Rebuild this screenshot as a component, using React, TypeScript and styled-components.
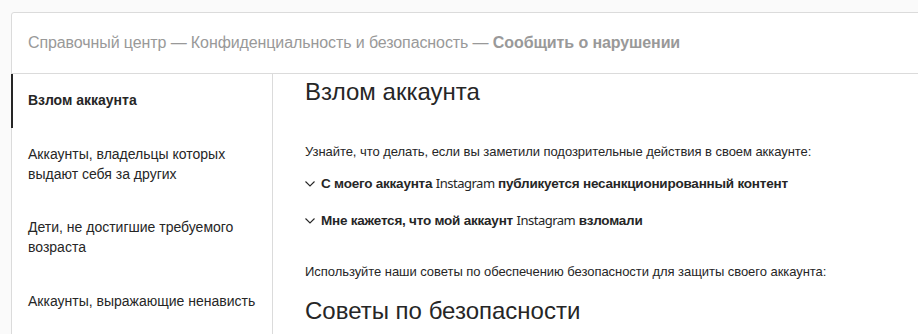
import styled, { createGlobalStyle } from 'styled-components';

const GlobalStyle = createGlobalStyle`
  html, body {
    margin: 0;
    padding: 0;
    background: #fafafa;
    overflow: hidden;
  }
  body {
    font-family: 'Liberation Sans', Arial, sans-serif;
    color: #262626;
  }
`;

const SIDEBAR_ITEMS = [
  { label: 'Взлом аккаунта', active: true },
  { label: 'Аккаунты, владельцы которых выдают себя за других', active: false },
  { label: 'Дети, не достигшие требуемого возраста', active: false },
  { label: 'Аккаунты, выражающие ненависть', active: false },
];

function Chevron() {
  return (
    <ChevronIcon viewBox="0 0 10 6" aria-hidden="true">
      <polyline points="0.5,0.5 5,5 9.5,0.5" />
    </ChevronIcon>
  );
}

function App() {
  return (
    <>
      <GlobalStyle />
      <Card>
        <Header>
          <Crumbs>
            Справочный центр — Конфиденциальность и безопасность —{' '}
            <strong>Сообщить о нарушении</strong>
          </Crumbs>
        </Header>
        <Body>
          <Sidebar>
            {SIDEBAR_ITEMS.map((item) => (
              <NavItem key={item.label} active={item.active}>
                {item.label}
              </NavItem>
            ))}
          </Sidebar>
          <Main>
            <Title>Взлом аккаунта</Title>
            <Lead>Узнайте, что делать, если вы заметили подозрительные действия в своем аккаунте:</Lead>
            <Toggle>
              <Chevron />
              <span>
                С моего аккаунта <Brand>Instagram</Brand> публикуется несанкционированный контент
              </span>
            </Toggle>
            <Toggle>
              <Chevron />
              <span>
                Мне кажется, что мой аккаунт <Brand>Instagram</Brand> взломали
              </span>
            </Toggle>
            <Lead spaced>Используйте наши советы по обеспечению безопасности для защиты своего аккаунта:</Lead>
            <SubTitle>Советы по безопасности</SubTitle>
          </Main>
        </Body>
      </Card>
    </>
  );
}

const Card = styled.div`
  margin: 12px 0 0 11px;
  width: 940px;
  height: 360px;
  background: #fff;
  border: 1px solid #dbdbdb;
  border-radius: 3px;
  display: flex;
  flex-direction: column;
`;

const Header = styled.header`
  height: 60px;
  padding: 0 16px;
  display: flex;
  align-items: center;
  border-bottom: 1px solid #dbdbdb;
`;

const Crumbs = styled.div`
  font-size: 16px;
  letter-spacing: -0.1px;
  color: #999;

  strong {
    font-weight: 700;
    color: #999;
  }
`;

const Body = styled.div`
  display: flex;
  flex: 1;
`;

const Sidebar = styled.nav`
  width: 260px;
  flex-shrink: 0;
  border-right: 1px solid #dbdbdb;
`;

const NavItem = styled.div<{ active: boolean }>`
  padding: 16px 16px 17.5px 15px;
  margin-left: -1px;
  font-size: 14px;
  line-height: 20px;
  color: #262626;
  font-weight: ${({ active }) => (active ? 700 : 400)};
  border-left: 2px solid ${({ active }) => (active ? '#262626' : 'transparent')};
`;

const Main = styled.main`
  padding: 4px 32px 0 32px;
  display: flex;
  flex-direction: column;
`;

const Title = styled.h1`
  margin: 0 0 37px;
  font-size: 24px;
  line-height: 28px;
  font-weight: 400;
  color: #262626;
`;

const Lead = styled.p<{ spaced?: boolean }>`
  margin: ${({ spaced }) => (spaced ? '16px 0 16px' : '0 0 12px')};
  font-size: 13px;
  line-height: 18px;
  letter-spacing: -0.05px;
  color: #262626;
`;

const Toggle = styled.div`
  display: flex;
  align-items: center;
  gap: 6px;
  margin-bottom: 16px;
  font-size: 13.5px;
  letter-spacing: -0.22px;
  line-height: 20px;
  font-weight: 700;
  color: #262626;
`;

const ChevronIcon = styled.svg`
  width: 10px;
  height: 6px;
  flex-shrink: 0;
  fill: none;
  stroke: #262626;
  stroke-width: 1.1;
`;

const Brand = styled.span`
  font-family: 'Noto Sans', 'Open Sans', sans-serif;
  font-weight: 400;
  font-size: 13px;
  letter-spacing: -0.5px;
`;

const SubTitle = styled.h2`
  margin: 0;
  font-size: 24px;
  line-height: 28px;
  font-weight: 400;
  color: #262626;
`;

export default App;
